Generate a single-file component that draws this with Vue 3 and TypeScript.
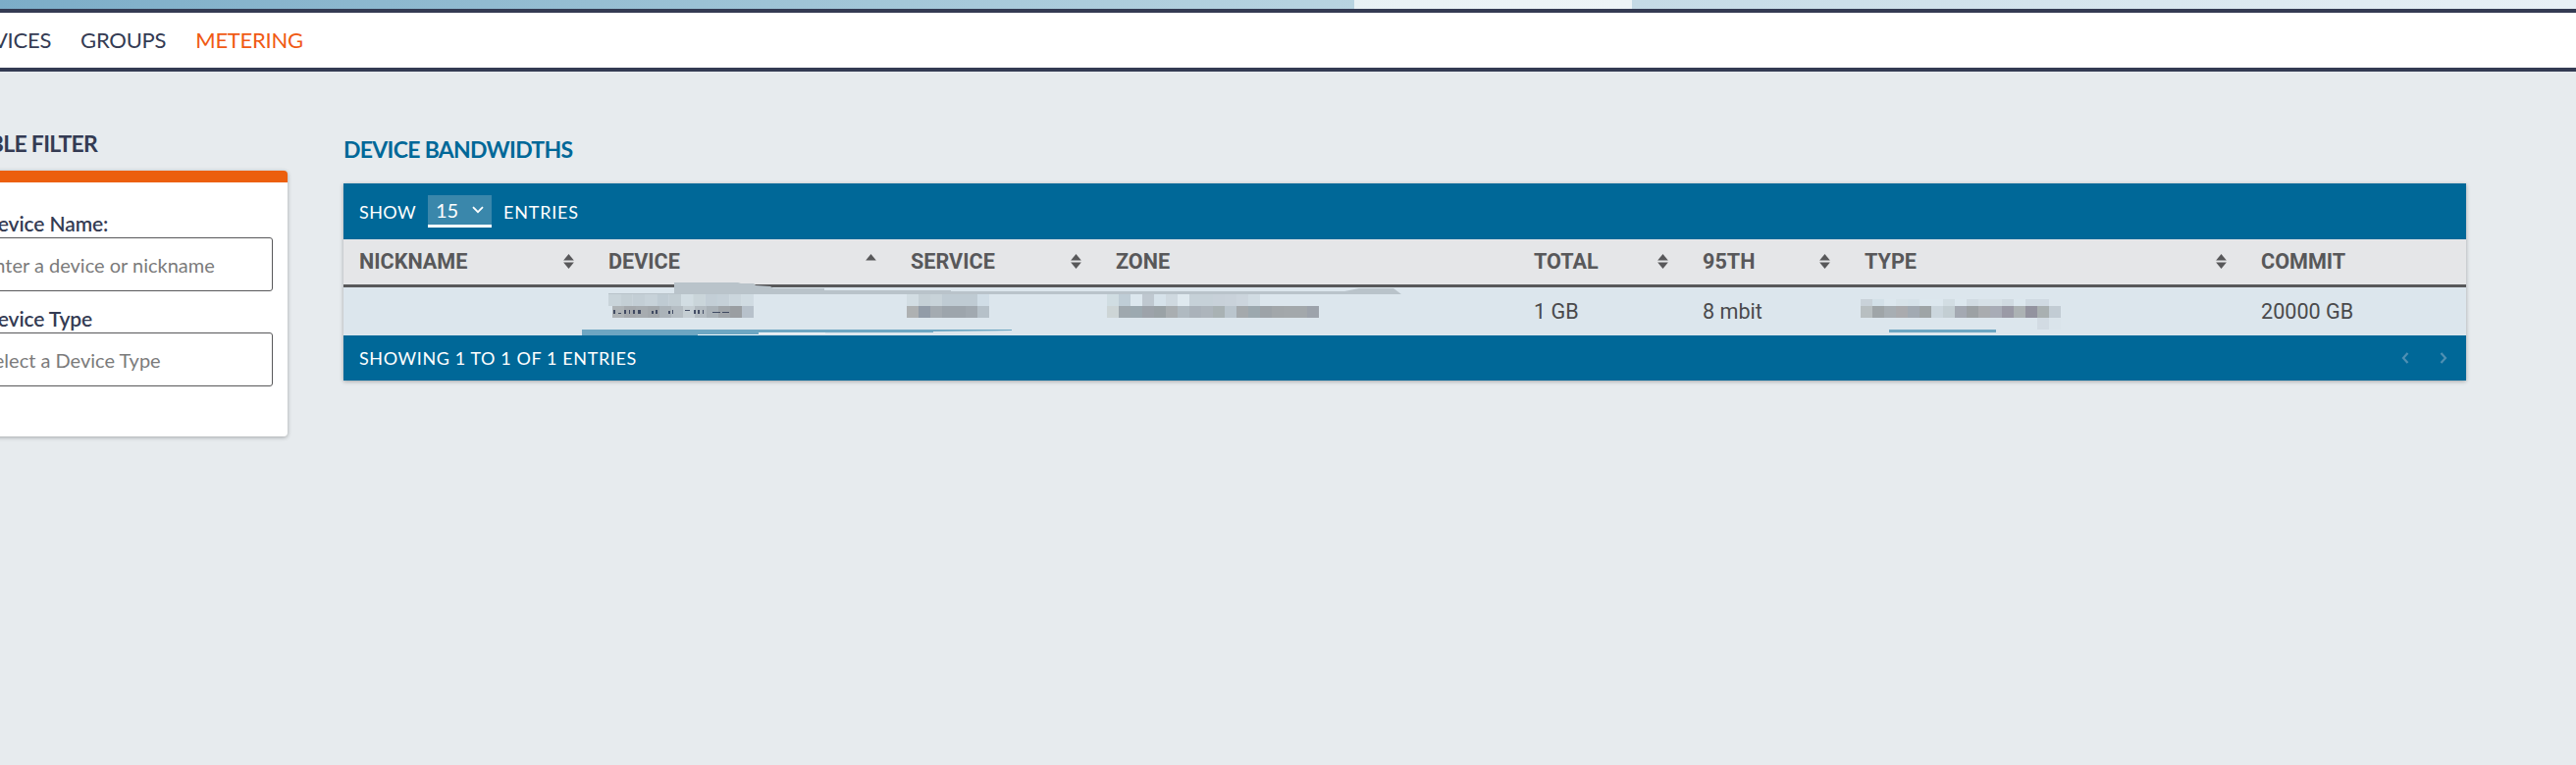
<script setup lang="ts">
interface Mosaic { x: number; y: number; w: number; h: number; colors: string[] }
const mosaics: Mosaic[] = [
  { x: 620, y: 300, w: 12.33, h: 12, colors: ['#c9d4da','#c4cfd5','#c3ced5','#c7d2d9','#bfcbd3','#c2cdd3','#d2dde3','#cad5da','#c3ced6','#c5d0d8','#cbd6dd','#d0dbe2'] },
  { x: 624, y: 312, w: 12, h: 12, colors: ['#aeb3b6','#a5a9ad','#a7acb0','#a3a8ac','#abb3b9','#b5bdc3','#c5ced3','#b4bcc2','#aab2b8','#a0a5aa','#9a9ea2','#b7c1cb'] },
  { x: 924, y: 300, w: 12, h: 12, colors: ['#d2dde3','#c5d0d6','#c8d3d9','#bfcbd3','#bfcbd3','#bfcbd3','#d0dde6'] },
  { x: 924, y: 312, w: 12, h: 12, colors: ['#aeb1b2','#929ca8','#a4abb1','#9da5ac','#9da5ac','#a1a9b0','#b6c1c9'] },
  { x: 1128, y: 300, w: 12, h: 12, colors: ['#d0dde2','#bfcdd6','#dce7ee','#bfc8d0','#d6e2ea','#cfd9e0','#dfe9ef','#c6d1d8','#c6d1d8','#c8d1d9','#c9d2da','#ccd5dd','#d1dce3'] },
  { x: 1128, y: 312, w: 12, h: 12, colors: ['#cdd5d6','#9fa8ae','#9ca9b0','#9da3aa','#9aa2a6','#a9aeb1','#b0bac1','#aab2ba','#adb5bc','#a9b2b4','#bac5cd','#a4a9ac','#9ca8ae','#9da3a8','#a2a7aa','#a3a8ab','#a3a8ab','#9da3ab'] },
  { x: 1896, y: 305, w: 12, h: 7, colors: ['#c9d2d9','#d3e0e8','#dce7ee','#d8e3e9','#d6e2e9','#dce7ee','#dce7ee','#d2dde3','#dce7ee','#d1dbe2','#d6e0e6','#d6e0e6','#d0dae1','#dce7ee','#d0dae2','#d0dae2'] },
  { x: 1896, y: 312, w: 12, h: 12, colors: ['#b8bfc1','#9fa5a8','#a7aeb3','#aaabae','#a2aab2','#9ea4a6','#cbd6dd','#c3ced3','#a4a9b2','#9ca1a4','#a9acaf','#a8acb6','#9a9aa6','#acb2b4','#93939f','#a9b0b1','#c2ccd4'] },
  { x: 2076, y: 324, w: 12, h: 12, colors: ['#d2dbe3','#dae4eb'] },
]
const cells = mosaics.flatMap((m) =>
  m.colors.map((fill, i) => ({ key: `${m.x}-${m.y}-${i}`, x: m.x + i * m.w, y: m.y, w: m.w, h: m.h, fill })),
)
const marks = [
  [625, 316, 2, 4], [630, 319, 3, 1], [636, 316, 2, 4], [641, 316, 1, 4], [645, 316, 2, 4], [650, 316, 3, 4],
  [664, 317, 2, 3], [668, 316, 2, 4], [681, 317, 2, 3], [685, 316, 1, 4], [698, 316, 5, 1], [707, 316, 2, 4],
  [711, 316, 2, 4], [716, 316, 1, 4], [726, 318, 8, 1], [736, 318, 7, 1],
]

type Sort = 'both' | 'up' | 'none'
interface Col { label: string; width: number; sort: Sort; value: string }
const cols: Col[] = [
  { label: 'Nickname', width: 254, sort: 'both', value: '' },
  { label: 'Device', width: 308, sort: 'up', value: '' },
  { label: 'Service', width: 209, sort: 'both', value: '' },
  { label: 'Zone', width: 426, sort: 'none', value: '' },
  { label: 'Total', width: 172, sort: 'both', value: '1 GB' },
  { label: '95th', width: 165, sort: 'both', value: '8 mbit' },
  { label: 'Type', width: 404, sort: 'both', value: '' },
  { label: 'Commit', width: 225, sort: 'none', value: '20000 GB' },
]
</script>

<template>
  <div class="page">
    <div class="topbar">
      <div class="seg seg-a"></div>
      <div class="seg seg-b"></div>
      <div class="seg seg-c"></div>
    </div>
    <nav class="nav">
      <a>Devices</a>
      <a>Groups</a>
      <a class="active">Metering</a>
    </nav>
    <main class="main">
      <aside class="side">
        <h2 class="side-title">Table Filter</h2>
        <form class="card">
          <label class="field">
            <span>Device Name:</span>
            <input type="text" placeholder="Enter a device or nickname" />
          </label>
          <label class="field">
            <span>Device Type</span>
            <input type="text" placeholder="Select a Device Type" />
          </label>
        </form>
      </aside>
      <section class="content">
        <h1 class="title">Device Bandwidths</h1>
        <div class="panel">
          <div class="panel-top">
            <span>Show</span>
            <div class="select">
              <span>15</span>
              <svg width="12" height="8" viewBox="0 0 12 8"><path d="M1 1.2 6 6.2 11 1.2" fill="none" stroke="#fff" stroke-width="1.8" /></svg>
            </div>
            <span class="entries">Entries</span>
          </div>
          <table class="table">
            <colgroup>
              <col v-for="c in cols" :key="c.label" :style="{ width: c.width + 'px' }" />
            </colgroup>
            <thead>
              <tr>
                <th v-for="c in cols" :key="c.label">
                  <div class="th-inner">
                    <span>{{ c.label }}</span>
                    <svg v-if="c.sort !== 'none'" class="sort" width="11" height="15" viewBox="0 0 10 14">
                      <path d="M5 0 10 6H0Z" fill="#58585a" />
                      <path v-if="c.sort === 'both'" d="M0 8H10L5 14Z" fill="#58585a" />
                    </svg>
                  </div>
                </th>
              </tr>
            </thead>
            <tbody>
              <tr>
                <td v-for="c in cols" :key="c.label">{{ c.value }}</td>
              </tr>
            </tbody>
          </table>
          <div class="panel-bottom">
            <span>Showing 1 to 1 of 1 entries</span>
            <div class="pager">
              <svg width="8" height="12" viewBox="0 0 8 12"><path d="M6.5 1 2 6l4.5 5" fill="none" stroke="#4f90b3" stroke-width="2.2" /></svg>
              <svg width="8" height="12" viewBox="0 0 8 12"><path d="M1.5 1 6 6l-4.5 5" fill="none" stroke="#4f90b3" stroke-width="2.2" /></svg>
            </div>
          </div>
          <svg class="redactions" width="2163" height="201" viewBox="350 187 2163 201">
            <polygon points="620,299 687,299 687,288 752,288 755,289 768,289 770,291 785,292 788,294 840,294 840,296 969,296 969,297 1370,297 1385,294 1420,294 1428,300 620,300" fill="#b9c3ca" />
            <rect v-for="c in cells" :key="c.key" :x="c.x" :y="c.y" :width="c.w" :height="c.h" :fill="c.fill" />
            <rect v-for="(m, i) in marks" :key="i" :x="m[0]" :y="m[1]" :width="m[2]" :height="m[3]" fill="#2f3a55" opacity="0.85" />
            <polygon points="593,336 1031,336 1031,337 951,338 951,339 773,339 773,341 711,341 711,342 593,342" fill="#6da6c2" />
            <rect x="711" y="341" width="62" height="1" fill="#f4f8fa" />
            <rect x="773" y="339" width="68" height="1" fill="#f4f8fa" />
            <rect x="1925" y="336" width="109" height="3" fill="#6da6c2" />
          </svg>
        </div>
      </section>
    </main>
  </div>
</template>

<style scoped>
.page {
  width: 2625px;
  height: 780px;
  overflow: hidden;
  background: #e7ebee;
  font-family: Lato, "Liberation Sans", sans-serif;
}
.topbar {
  display: flex;
  height: 9px;
}
.seg-a {
  width: 1380px;
  background: linear-gradient(90deg, #7cadc8, #b8d4e1);
}
.seg-b {
  width: 283px;
  background: linear-gradient(90deg, #e8f1f5, #edf4f7);
}
.seg-c {
  flex: 1;
  background: linear-gradient(90deg, #c4dae6, #e8f0f6);
}
.nav {
  display: flex;
  align-items: center;
  gap: 30px;
  height: 56px;
  background: #fff;
  border-top: 4px solid #343b53;
  border-bottom: 4px solid #343b53;
  margin-left: -36px;
  font-size: 22px;
  line-height: 1;
  color: #343b53;
  text-transform: uppercase;
  letter-spacing: -0.25px;
}
.nav .active {
  color: #f05a14;
}
.main {
  display: flex;
  gap: 57px;
  margin-left: -47px;
}
.side {
  width: 340px;
  flex: none;
}
.side-title {
  margin: 60px 0 0 9px;
  height: 41px;
  font-size: 23px;
  line-height: 26px;
  font-weight: 700;
  color: #343b53;
  text-transform: uppercase;
  letter-spacing: -0.7px;
}
.card {
  height: 271px;
  box-sizing: border-box;
  background: #fff;
  border-top: 12px solid #ec5f0d;
  border-radius: 4px;
  padding: 28px 15px 0;
  box-shadow: 0 1px 4px rgba(0, 0, 0, 0.3);
}
.field {
  display: flex;
  flex-direction: column;
  margin-bottom: 14px;
}
.field span {
  margin-left: 14px;
  font-size: 21px;
  line-height: 28px;
  font-weight: 600;
  color: #343b53;
  letter-spacing: -0.1px;
}
.field input {
  height: 55px;
  box-sizing: border-box;
  border: 1px solid #58585a;
  border-radius: 3px;
  padding: 0 14px;
  font: 20px Lato, "Liberation Sans", sans-serif;
  background: #fff;
}
.field input::placeholder {
  color: #7b7b7b;
  opacity: 1;
}
.content {
  width: 2163px;
  flex: none;
}
.title {
  margin: 66px 0 0;
  height: 48px;
  font-size: 23px;
  line-height: 26px;
  font-weight: 700;
  color: #006898;
  text-transform: uppercase;
  letter-spacing: -0.7px;
}
.panel {
  position: relative;
  box-shadow: 0 1px 4px rgba(0, 0, 0, 0.3);
}
.panel-top {
  display: flex;
  align-items: center;
  gap: 12px;
  height: 57px;
  padding-left: 16px;
  background: #006898;
  color: #fff;
  font-size: 18px;
  text-transform: uppercase;
  letter-spacing: 0.4px;
}
.entries {
  letter-spacing: 0.8px;
}
.select {
  display: flex;
  align-items: center;
  justify-content: space-between;
  box-sizing: border-box;
  width: 65px;
  height: 33px;
  padding: 0 8px 0 8px;
  background: #3a87ab;
  border-bottom: 3px solid #fff;
  font-size: 20px;
  letter-spacing: 0;
}
.table {
  width: 2163px;
  table-layout: fixed;
  border-collapse: collapse;
  font-family: Roboto, "Liberation Sans", sans-serif;
  font-size: 21.6px;
  color: #4a4a4c;
}
th {
  height: 47px;
  padding: 0 16px;
  box-sizing: border-box;
  background: #e5e6e8;
  border-bottom: 3px solid #58585a;
  color: #58585a;
  font-weight: 700;
  text-align: left;
  text-transform: uppercase;
}
.th-inner {
  display: flex;
  align-items: center;
  justify-content: space-between;
}
.sort {
  margin-right: 3px;
  margin-top: -1px;
}
td {
  height: 51px;
  padding: 0 16px;
  box-sizing: border-box;
  background: #dce6ed;
}
.panel-bottom {
  display: flex;
  align-items: center;
  justify-content: space-between;
  height: 46px;
  padding: 0 19px 0 16px;
  background: #006898;
  color: #fff;
  font-size: 18px;
  text-transform: uppercase;
  letter-spacing: 0.6px;
}
.pager {
  display: flex;
  gap: 31px;
}
.redactions {
  position: absolute;
  left: 0;
  top: 0;
  pointer-events: none;
}
</style>

<style>
html, body {
  margin: 0;
  background: #e7ebee;
  overflow: hidden;
}
</style>
